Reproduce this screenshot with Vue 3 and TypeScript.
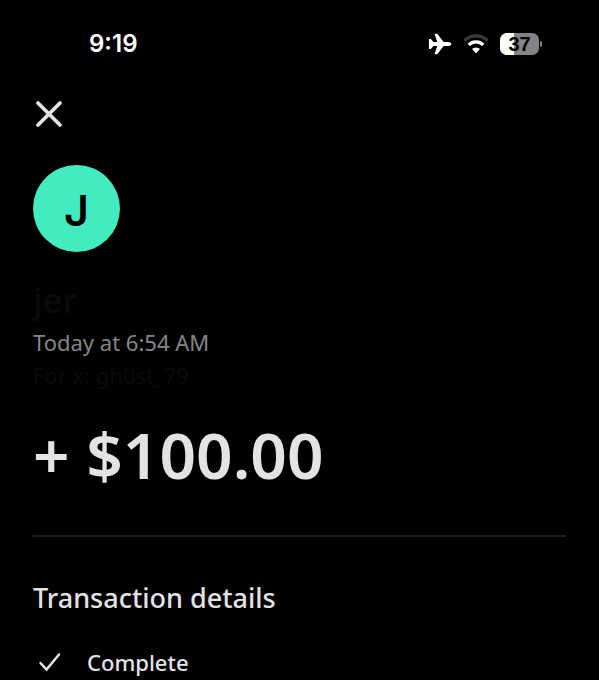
<script setup lang="ts">
interface Transaction {
  name: string
  time: string
  note: string
  amount: string
  status: string
}

const transaction: Transaction = {
  name: 'jer',
  time: 'Today at 6:54 AM',
  note: 'For x: gh0st_79',
  amount: '+ $100.00',
  status: 'Complete',
}
const clock = '9:19'
const battery = 37
</script>

<template>
  <div class="screen">
    <header class="status-bar">
      <span class="clock">{{ clock }}</span>
      <div class="indicators">
        <svg class="plane" viewBox="0 0 24 22" aria-hidden="true">
          <path d="M23.400 11c0-1.200-1.500-2.100-3.400-2.100h-4.300L9.800 1.500C9.400 1 9 .8 8.500.8H7.200c-.4 0-.6.3-.5.7l2.500 7.400-3.700.2L3.300 6.500C3 6.100 2.700 6 2.300 6h-.8c-.4 0-.6.3-.6.6V15.400c0 .4.2.6.6.6h.8c.4 0 .7-.1 1-.5l2.200-2.600 3.700.2-2.500 7.400c-.1.4.1.7.5.7h1.300c.5 0 .9-.2 1.300-.7l5.900-7.400H20c1.900 0 3.400-.9 3.400-2.100z" />
        </svg>
        <svg class="wifi" viewBox="0 0 26 20" aria-hidden="true">
          <path class="dim" d="M1.500 6.500a16.500 16.500 0 0 1 23 0" />
          <path class="lit" d="M5.700 10.900a10.400 10.400 0 0 1 14.600 0" />
          <path class="dot" d="M13 19.300l-4-4.200a5.700 5.700 0 0 1 8 0z" />
        </svg>
        <div class="battery">
          <div class="cell">
            <div class="charge" :style="{ width: battery + '%' }"></div>
            <span class="level">{{ battery }}</span>
          </div>
          <div class="cap"></div>
        </div>
      </div>
    </header>

    <main class="content">
      <button class="close" type="button" aria-label="Close">
        <svg viewBox="0 0 32 32" aria-hidden="true">
          <path d="M5 5l22 22M27 5L5 27" />
        </svg>
      </button>

      <div class="avatar">J</div>
      <h1 class="name">{{ transaction.name }}</h1>
      <p class="time">{{ transaction.time }}</p>
      <p class="note">{{ transaction.note }}</p>
      <p class="amount">{{ transaction.amount }}</p>

      <section class="details">
        <h2 class="heading">Transaction details</h2>
        <div class="status">
          <svg viewBox="0 0 24 20" aria-hidden="true">
            <path d="M2.500 11l6 6.500L21 2.500" />
          </svg>
          <span>{{ transaction.status }}</span>
        </div>
      </section>
    </main>
  </div>
</template>

<style>
body {
  background: #000;
}
</style>

<style scoped>
.screen {
  min-height: 100vh;
  box-sizing: border-box;
  overflow: hidden;
  background: #000;
  color: #e3e3e3;
  font-family: "Noto Sans", sans-serif;
}

.status-bar {
  display: flex;
  align-items: center;
  justify-content: space-between;
  height: 32px;
  padding: 28px 57px 0 89px;
  font-family: Inter, sans-serif;
}

.clock {
  color: #fff;
  font-size: 24px;
  font-weight: 600;
  line-height: 32px;
}

.indicators {
  display: flex;
  align-items: center;
  gap: 11px;
}

.plane {
  width: 24px;
  height: 22px;
  fill: #fff;
}

.wifi {
  width: 26px;
  height: 20px;
  fill: none;
  stroke-width: 3.4;
}

.dim {
  stroke: #3b3b3b;
}

.lit {
  stroke: #fff;
}

.dot {
  fill: #fff;
}

.battery {
  display: flex;
  align-items: center;
  gap: 1px;
}

.cell {
  display: grid;
  width: 39px;
  height: 22px;
  overflow: hidden;
  border-radius: 7px;
  background: #848484;
}

.charge,
.level {
  grid-area: 1 / 1;
}

.charge {
  background: #fff;
}

.level {
  z-index: 1;
  color: #000;
  font-family: "Liberation Sans", sans-serif;
  font-size: 20px;
  font-weight: 700;
  line-height: 22px;
  text-align: center;
}

.cap {
  width: 2px;
  height: 6px;
  border-radius: 0 2px 2px 0;
  background: #848484;
}

.content {
  padding: 38px 33px 0;
}

.close {
  display: block;
  width: 32px;
  height: 32px;
  padding: 0;
  border: 0;
  background: none;
  cursor: pointer;
}

.close svg {
  display: block;
  width: 32px;
  height: 32px;
  fill: none;
  stroke: #e3e3e3;
  stroke-width: 3.8;
  stroke-linecap: round;
}

.avatar {
  width: 87px;
  height: 87px;
  margin-top: 35px;
  border-radius: 50%;
  background: #43ebc0;
  color: #000;
  font-family: Inter, sans-serif;
  font-size: 43px;
  font-weight: 600;
  line-height: 90px;
  text-align: center;
}

.name,
.time,
.note,
.amount,
.heading {
  margin: 0;
}

.name {
  margin-top: 26px;
  color: #0b0a04;
  font-size: 34px;
  font-weight: 600;
  line-height: 44px;
}

.time {
  margin-top: 4px;
  color: #858585;
  font-size: 22px;
  line-height: 32px;
}

.note {
  margin-top: 1px;
  color: #0a0a0a;
  font-size: 22px;
  line-height: 32px;
}

.amount {
  margin-top: 20px;
  font-size: 64px;
  font-weight: 600;
  line-height: 88px;
}

.details {
  margin-top: 36px;
  padding-top: 43px;
  border-top: 2px solid #1c1c1c;
}

.heading {
  font-size: 27px;
  font-weight: 550;
  line-height: 36px;
}

.status {
  display: flex;
  align-items: center;
  gap: 25px;
  margin-top: 29px;
  padding-left: 5px;
  font-size: 22px;
  font-weight: 550;
  line-height: 34px;
}

.status svg {
  width: 24px;
  height: 20px;
  fill: none;
  stroke: #e3e3e3;
  stroke-width: 2.5;
  stroke-linecap: round;
}
</style>
